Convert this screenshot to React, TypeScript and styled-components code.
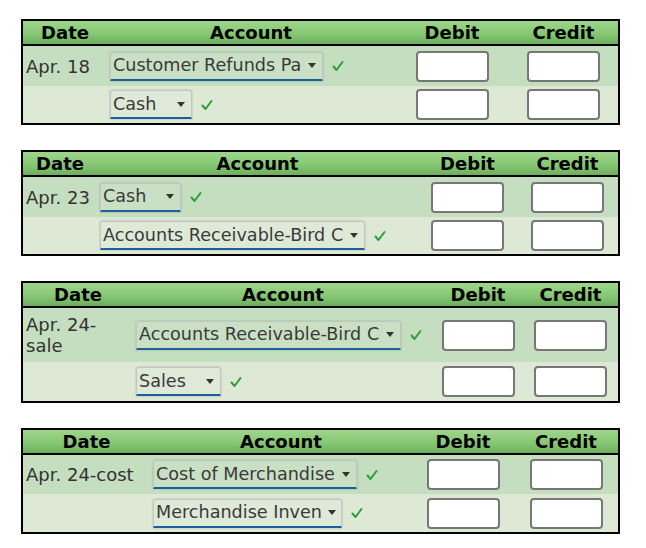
import React from "react";
import styled, { createGlobalStyle } from "styled-components";

const Global = createGlobalStyle`
  html, body { margin: 0; padding: 0; background: #ffffff; }
  body { font-family: "DejaVu Sans", Verdana, sans-serif; }
`;

const Page = styled.div`
  display: flex;
  flex-direction: column;
  gap: 25px;
  padding: 19px 0 0 21px;
`;

const Table = styled.div<{ $cols: string; $rows: string }>`
  display: grid;
  grid-template-columns: ${(p) => p.$cols};
  grid-template-rows: 25px ${(p) => p.$rows};
  width: 595px;
  border: 2px solid #000;
`;

const HeadCell = styled.div`
  background: linear-gradient(#9ed58c 0%, #86c874 55%, #6cae5d 100%);
  border-bottom: 2px solid #000;
  font-weight: bold;
  font-size: 18px;
  color: #000;
  text-align: center;
  line-height: 23px;
`;

const Cell = styled.div<{ $alt?: boolean }>`
  background: ${(p) => (p.$alt ? "#dde8d5" : "#c5dec0")};
  display: flex;
  align-items: center;
  font-size: 18px;
  line-height: 21px;
  color: #333;
`;

const DateCell = styled(Cell)`
  padding-left: 3px;
`;

const AccountCell = styled(Cell)`
  padding-left: 3px;
  gap: 9px;
`;

const AmountCell = styled(Cell)`
  justify-content: center;
`;

const Select = styled.div`
  box-sizing: border-box;
  display: flex;
  align-items: center;
  justify-content: space-between;
  height: 29px;
  padding: 0 6px 0 2px;
  border: 1px solid #c4c4c4;
  border-bottom: 2px solid #1b5f9c;
  border-radius: 3px 3px 0 0;
  box-shadow: 0 0 2px rgba(0, 0, 0, 0.25);
  background: rgba(255, 255, 255, 0.08);
  font-size: 17.6px;
  color: #3a3a3a;
  white-space: nowrap;
  overflow: hidden;
`;

const Arrow = styled.span`
  width: 0;
  height: 0;
  flex: none;
  border-left: 4.5px solid transparent;
  border-right: 4.5px solid transparent;
  border-top: 5px solid #333;
  margin-left: 6px;
`;

const Amount = styled.input`
  box-sizing: border-box;
  width: 73px;
  height: 31px;
  border: 2px solid #777;
  border-radius: 4px;
  background: #fff;
  padding: 0;
  margin: 0;
  outline: none;
`;

const Check = () => (
  <svg width="12" height="12" viewBox="0 0 12 12">
    <polyline
      points="1.5,6.5 4.5,10 10.5,2"
      fill="none"
      stroke="#2f9c3b"
      strokeWidth="2"
      strokeLinecap="round"
      strokeLinejoin="round"
    />
  </svg>
);

type Row = { account: string; width: number };
type Entry = { cols: number[]; rows: number[]; date: React.ReactNode; lines: Row[] };

const entries: Entry[] = [
  {
    cols: [84, 288, 114, 109],
    rows: [40, 37],
    date: "Apr. 18",
    lines: [
      { account: "Customer Refunds Pa", width: 213 },
      { account: "Cash", width: 82 },
    ],
  },
  {
    cols: [74, 321, 99, 101],
    rows: [40, 37],
    date: "Apr. 23",
    lines: [
      { account: "Cash", width: 81 },
      { account: "Accounts Receivable-Bird C", width: 265 },
    ],
  },
  {
    cols: [110, 300, 90, 95],
    rows: [54, 39],
    date: (
      <>
        Apr. 24-
        <br />
        sale
      </>
    ),
    lines: [
      { account: "Accounts Receivable-Bird C", width: 265 },
      { account: "Sales", width: 85 },
    ],
  },
  {
    cols: [127, 262, 102, 104],
    rows: [39, 38],
    date: "Apr. 24-cost",
    lines: [
      { account: "Cost of Merchandise", width: 204 },
      { account: "Merchandise Inven", width: 189 },
    ],
  },
];

export default function App() {
  return (
    <>
      <Global />
      <Page>
        {entries.map((e, i) => (
          <Table key={i} $cols={e.cols.map((c) => `${c}px`).join(" ")} $rows={e.rows.map((r) => `${r}px`).join(" ")}>
            <HeadCell>Date</HeadCell>
            <HeadCell>Account</HeadCell>
            <HeadCell>Debit</HeadCell>
            <HeadCell>Credit</HeadCell>
            {e.lines.map((l, j) => (
              <React.Fragment key={j}>
                <DateCell $alt={j === 1}>{j === 0 ? <span>{e.date}</span> : null}</DateCell>
                <AccountCell $alt={j === 1}>
                  <Select style={{ width: l.width }}>
                    <span>{l.account}</span>
                    <Arrow />
                  </Select>
                  <Check />
                </AccountCell>
                <AmountCell $alt={j === 1}>
                  <Amount type="text" />
                </AmountCell>
                <AmountCell $alt={j === 1}>
                  <Amount type="text" />
                </AmountCell>
              </React.Fragment>
            ))}
          </Table>
        ))}
      </Page>
    </>
  );
}
